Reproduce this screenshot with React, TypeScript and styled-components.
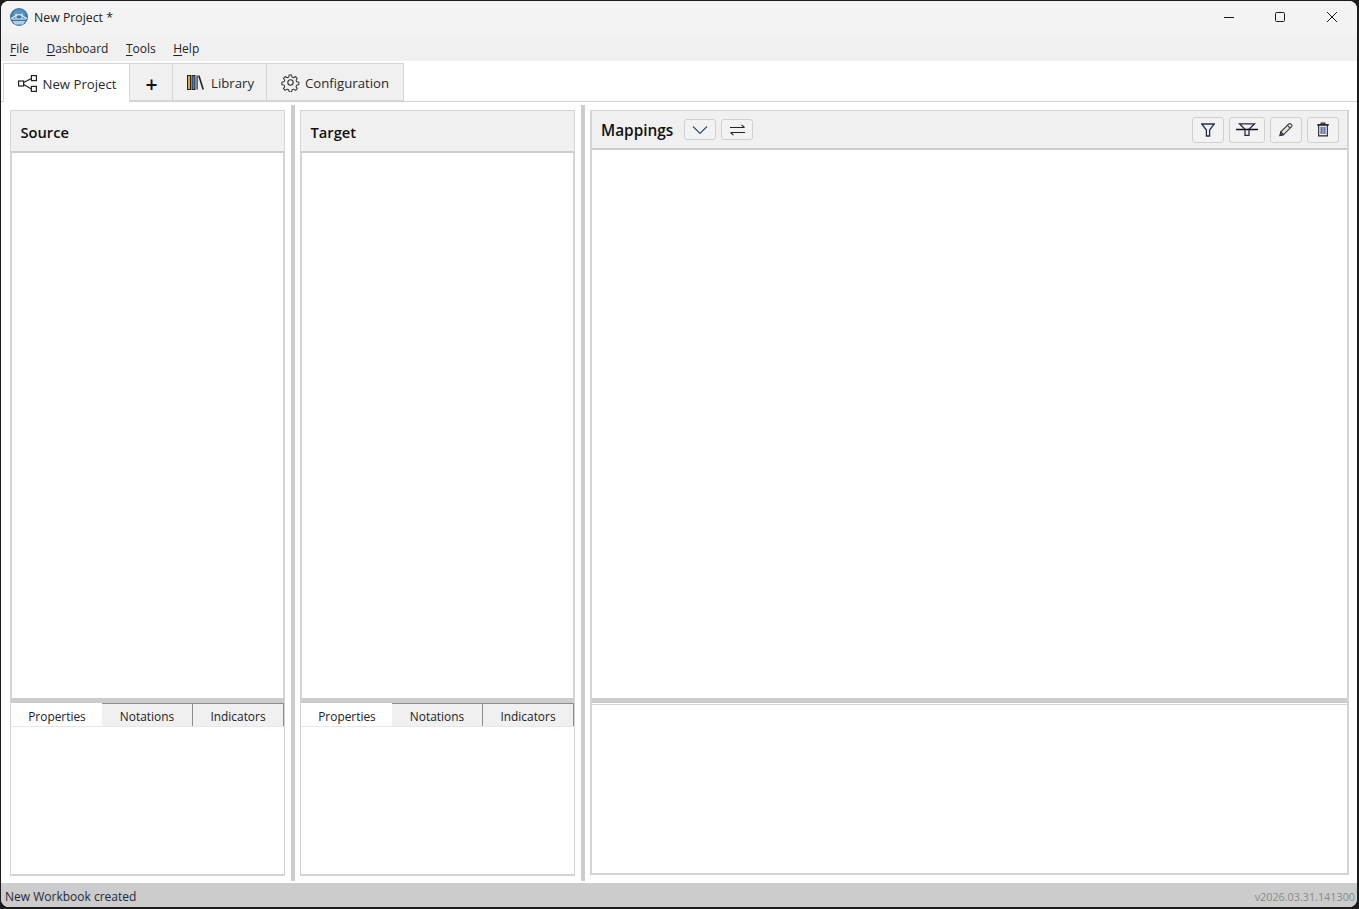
import React from 'react';
import styled, { createGlobalStyle } from 'styled-components';

const Global = createGlobalStyle`
  html, body {
    margin: 0;
    padding: 0;
    height: 909px;
    overflow: hidden;
    background: #1c1c1c;
  }
  * {
    box-sizing: border-box;
  }
`;

const AppLogo = () => (
  <svg width="18" height="18" viewBox="0 0 18 18">
    <circle cx="9" cy="9" r="9" fill="#3a77aa" />
    <path d="M2 7.500C3 3.500 6 1.500 9 1.500s6 2 7 6z" fill="#5c93bf" />
    <path d="M1 10.500c3-1 5-4 8-4s5 3 8 4" fill="none" stroke="#eef4f8" strokeWidth="1.200" />
    <path d="M6 5.500v5.500M12 5.500v5.500M2 11h14" fill="none" stroke="#eef4f8" strokeWidth="1" />
    <path d="M2.500 13h13L13 16.500H5z" fill="#b4cfe2" />
  </svg>
);

const ProjectIcon = () => (
  <svg width="19" height="17" viewBox="0 0 19 17" fill="none" stroke="#222" strokeWidth="1.200">
    <rect x="0.600" y="6" width="5" height="5" />
    <rect x="13.400" y="0.600" width="5" height="5" />
    <rect x="13.400" y="11.400" width="5" height="5" />
    <path d="M5.600 7.500L13.400 3.500M5.600 9.500L13.400 14" />
  </svg>
);

const LibraryIcon = () => (
  <svg width="17" height="15" viewBox="0 0 17 15">
    <rect x="0.500" y="0.500" width="3" height="14" fill="#e3a63a" stroke="#222" />
    <rect x="5" y="0.500" width="3" height="14" fill="#4a7fc0" stroke="#222" />
    <rect x="9.500" y="0.500" width="1.200" height="14" fill="#222" />
    <path d="M11.800 0.500l4.400 14" stroke="#222" strokeWidth="1.600" fill="none" />
  </svg>
);

const GearIcon = () => (
  <svg width="19" height="19" viewBox="0 0 24 24" fill="none" stroke="#333" strokeWidth="1.400" strokeLinejoin="round">
    <circle cx="12" cy="12" r="3.400" />
    <path d="M10.300 1.800h3.400l.6 3 2.200.9 2.600-1.700 2.400 2.400-1.700 2.600.9 2.200 3 .6v3.400l-3 .6-.9 2.200 1.700 2.600-2.400 2.400-2.600-1.700-2.200.9-.6 3h-3.400l-.6-3-2.200-.9-2.600 1.700-2.400-2.400 1.700-2.600-.9-2.200-3-.6v-3.400l3-.6.9-2.200-1.700-2.600 2.400-2.400 2.600 1.700 2.200-.9z" transform="translate(12 12) scale(.92) translate(-12.200 -12.200)" />
  </svg>
);

const ChevronIcon = () => (
  <svg width="16" height="10" viewBox="0 0 16 10" fill="none" stroke="#2c4a73" strokeWidth="1.100">
    <path d="M1 1.500l7 7 7-7" />
  </svg>
);

const SwapIcon = () => (
  <svg width="15" height="12" viewBox="0 0 15 12" fill="none" stroke="#222" strokeWidth="1.100">
    <path d="M0 3.500h14.500M11.500 .8l3 2.700" />
    <path d="M15 8.500H.5M3.500 11.200L.5 8.500" />
  </svg>
);

const FilterIcon = () => (
  <svg width="14" height="14" viewBox="0 0 14 14" fill="none" stroke="#1f2f4f" strokeWidth="1.300">
    <path d="M.8 1h12.400L8.600 7v6H5.400V7z" />
  </svg>
);

const FilterOffIcon = () => (
  <svg width="22" height="13" viewBox="0 0 22 13" fill="none" stroke="#1f2f4f" strokeWidth="1.300">
    <path d="M3.500.8h15l-5.500 5.400v6.200H9V6.200z" />
    <path d="M0 6.500h22" stroke="#111" />
  </svg>
);

const PencilIcon = () => (
  <svg width="14" height="15" viewBox="0 0 15 15" fill="none" stroke="#333" strokeWidth="1.100">
    <path d="M1 14l1-4 8.500-8.500a1.400 1.400 0 0 1 2 0l1 1a1.400 1.400 0 0 1 0 2L5 13z" fill="#e9e4da" />
    <path d="M1 14l1-4 3 3z" fill="#2e5f96" />
    <path d="M9 3l3 3" />
  </svg>
);

const TrashIcon = () => (
  <svg width="12" height="15" viewBox="0 0 13 15" fill="none" stroke="#222" strokeWidth="1.200">
    <path d="M0 2.500h13M4.500 2.500V.6h4v1.900" />
    <path d="M1.800 2.500v11.900h9.400V2.500z" />
    <path d="M4.500 4.500v8" stroke="#3f6fb3" strokeWidth="1.500" />
    <path d="M6.500 4.500v8" stroke="#8a5aa8" strokeWidth="1.500" />
    <path d="M8.500 4.500v8" stroke="#3f6fb3" strokeWidth="1.500" />
  </svg>
);

const MinimizeIcon = () => (
  <svg width="12" height="12" viewBox="0 0 12 12" stroke="#1a1a1a" strokeWidth="1">
    <path d="M2 6.500h10" />
  </svg>
);

const MaximizeIcon = () => (
  <svg width="12" height="12" viewBox="0 0 12 12" fill="none" stroke="#1a1a1a" strokeWidth="1">
    <rect x="1.500" y="1.500" width="9" height="9" rx="1.200" />
  </svg>
);

const CloseIcon = () => (
  <svg width="12" height="12" viewBox="0 0 12 12" stroke="#1a1a1a" strokeWidth="1">
    <path d="M1 1l10 10M11 1L1 11" />
  </svg>
);

const App: React.FC = () => {
  return (
    <>
      <Global />
      <Window>
        <TitleBar>
          <AppLogo />
          <TitleText>New Project *</TitleText>
          <WindowControls>
            <WindowButton><MinimizeIcon /></WindowButton>
            <WindowButton><MaximizeIcon /></WindowButton>
            <WindowButton><CloseIcon /></WindowButton>
          </WindowControls>
        </TitleBar>

        <MenuBar>
          <MenuItem><u>F</u>ile</MenuItem>
          <MenuItem><u>D</u>ashboard</MenuItem>
          <MenuItem><u>T</u>ools</MenuItem>
          <MenuItem><u>H</u>elp</MenuItem>
        </MenuBar>

        <TabStrip>
          <MainTab $active $width={127} $gap={6} $indent={1}>
            <ProjectIcon />
            New Project
          </MainTab>
          <PlusTab $width={43}>+</PlusTab>
          <MainTab $width={94} $gap={7} $indent={2}>
            <LibraryIcon />
            Library
          </MainTab>
          <MainTab $width={137} $gap={5}>
            <GearIcon />
            Configuration
          </MainTab>
        </TabStrip>

        <Workspace>
          <SidePanel title="Source" />
          <Gutter />
          <SidePanel title="Target" />
          <Gutter />
          <MappingsPanel>
            <MappingsHeader>
              <MappingsTitle>Mappings</MappingsTitle>
              <ToolButton $width={32} $height={21}><ChevronIcon /></ToolButton>
              <ToolButton $width={32} $height={21}><SwapIcon /></ToolButton>
              <ToolGroup>
                <ToolButton $width={32} $height={26}><FilterIcon /></ToolButton>
                <ToolButton $width={36} $height={26}><FilterOffIcon /></ToolButton>
                <ToolButton $width={32} $height={26}><PencilIcon /></ToolButton>
                <ToolButton $width={32} $height={26}><TrashIcon /></ToolButton>
              </ToolGroup>
            </MappingsHeader>
            <MappingsBody />
            <Splitter />
            <MappingsDetail />
          </MappingsPanel>
        </Workspace>

        <StatusBar>
          <span>New Workbook created</span>
          <Version>v2026.03.31.141300</Version>
        </StatusBar>
      </Window>
    </>
  );
};

const SidePanel: React.FC<{ title: string }> = ({ title }) => (
  <Panel>
    <PanelHeader>{title}</PanelHeader>
    <PanelBody />
    <Splitter />
    <SubTabs>
      <SubTab $active>Properties</SubTab>
      <SubTab>Notations</SubTab>
      <SubTab>Indicators</SubTab>
    </SubTabs>
    <SubTabBody />
  </Panel>
);

// Styles
const Window = styled.div`
  width: 1356px;
  height: 906px;
  margin: 1px 0 0 1px;
  display: flex;
  flex-direction: column;
  background: #ffffff;
  border-radius: 8px;
  overflow: hidden;
  font-family: 'Open Sans', 'Noto Sans', sans-serif;
  color: #1a1a1a;
`;

const TitleBar = styled.div`
  height: 34px;
  flex: none;
  display: flex;
  align-items: center;
  padding: 0 0 2px 9px;
  background: #f3f3f3;
`;

const TitleText = styled.span`
  margin-left: 6px;
  font-size: 12.300px;
  color: #222222;
`;

const WindowControls = styled.div`
  margin-left: auto;
  margin-right: -1px;
  display: flex;
`;

const WindowButton = styled.div`
  width: 52px;
  height: 32px;
  display: flex;
  align-items: center;
  justify-content: center;
`;

const MenuBar = styled.div`
  height: 26px;
  flex: none;
  display: flex;
  align-items: center;
  gap: 17.500px;
  padding-left: 9px;
  background: #f0f0f0;
  font-size: 12px;
`;

const MenuItem = styled.span`
  color: #222222;
  u {
    text-underline-offset: 2px;
  }
`;

const TabStrip = styled.div`
  height: 41px;
  flex: none;
  display: flex;
  align-items: flex-end;
  padding: 2px 0 0 2px;
  background: #ffffff;
  border-bottom: 1px solid #d0d0d0;
`;

const MainTab = styled.div<{ $active?: boolean; $width: number; $gap?: number; $indent?: number }>`
  width: ${(p) => p.$width}px;
  height: ${(p) => (p.$active ? 39 : 38)}px;
  margin-bottom: ${(p) => (p.$active ? -1 : 0)}px;
  padding: 1px 0 0 ${(p) => p.$indent ?? 0}px;
  display: flex;
  align-items: center;
  justify-content: center;
  gap: ${(p) => p.$gap ?? 6}px;
  font-size: 13.200px;
  color: #2a2a2a;
  background: ${(p) => (p.$active ? '#ffffff' : '#f0f0f0')};
  border: 1px solid #d6d6d6;
  border-left-width: ${(p) => (p.$active ? 1 : 0)}px;
  border-bottom-width: ${(p) => (p.$active ? 0 : 1)}px;
`;

const PlusTab = styled(MainTab)`
  padding: 3px 0 0 1px;
  font-size: 21px;
  font-weight: 600;
  color: #111111;
`;

const Workspace = styled.div`
  flex: 1;
  min-height: 0;
  display: flex;
  align-items: stretch;
  padding: 3px 8px 2px 9px;
  gap: 5px;
`;

const Gutter = styled.div`
  width: 4px;
  flex: none;
  margin-left: 1px;
  background: #cccccc;
`;

const Panel = styled.div`
  width: 275px;
  flex: none;
  margin: 5px 0;
  display: flex;
  flex-direction: column;
  border: 1px solid #d4d4d4;
  border-bottom-width: 2px;
  background: #ffffff;
`;

const PanelHeader = styled.div`
  height: 42px;
  flex: none;
  display: flex;
  align-items: center;
  padding: 2px 0 0 9.500px;
  background: #f0f0f0;
  border-bottom: 2px solid #cccccc;
  font-size: 14.700px;
  font-weight: 600;
  color: #111111;
`;

const PanelBody = styled.div`
  flex: 1;
  border: solid #d4d4d4;
  border-width: 0 1px;
`;

const Splitter = styled.div`
  height: 5px;
  flex: none;
  background: #cccccc;
`;

const SubTabs = styled.div`
  height: 23px;
  flex: none;
  display: flex;
  margin-left: 1px;
`;

const SubTab = styled.div<{ $active?: boolean }>`
  flex: 1;
  display: flex;
  align-items: center;
  justify-content: center;
  padding-top: 1px;
  font-size: 11.900px;
  color: #222222;
  background: ${(p) => (p.$active ? '#ffffff' : '#f0f0f0')};
  border-top: 1px solid ${(p) => (p.$active ? '#ffffff' : '#8c8c8c')};
  border-right: ${(p) => (p.$active ? 'none' : '1px solid #8c8c8c')};
`;

const SubTabBody = styled.div`
  height: 148px;
  flex: none;
  border-top: 1px solid #e8e8e8;
`;

const MappingsPanel = styled.div`
  flex: 1;
  min-width: 0;
  margin: 5px 0 6px;
  display: flex;
  flex-direction: column;
  border: 2px solid #d4d4d4;
  border-top-width: 1px;
`;

const MappingsHeader = styled.div`
  height: 39px;
  flex: none;
  display: flex;
  align-items: center;
  gap: 5px;
  padding: 0 8px 0 9px;
  background: #f0f0f0;
  border-bottom: 2px solid #cccccc;
`;

const MappingsTitle = styled.span`
  width: 73px;
  margin-right: 5px;
  padding-top: 1px;
  font-size: 15.400px;
  font-weight: 600;
  white-space: nowrap;
  color: #111111;
`;

const ToolGroup = styled.div`
  margin-left: auto;
  display: flex;
  gap: 5px;
`;

const ToolButton = styled.div<{ $width: number; $height: number }>`
  width: ${(p) => p.$width}px;
  height: ${(p) => p.$height}px;
  display: flex;
  align-items: center;
  justify-content: center;
  background: #f2f2f2;
  border: 1px solid #d0d0d0;
  border-radius: 3px;
`;

const MappingsBody = styled.div`
  flex: 1;
  background: #ffffff;
`;

const MappingsDetail = styled.div`
  height: 170px;
  flex: none;
  background: #ffffff;
  box-shadow: inset 0 1px 0 #ffffff, inset 0 2px 0 #d4d4d4;
`;

const StatusBar = styled.div`
  height: 24px;
  flex: none;
  display: flex;
  align-items: center;
  justify-content: space-between;
  padding: 2px 2px 0 4px;
  background: #cccccc;
  font-size: 12px;
  color: #1f2a38;
`;

const Version = styled.span`
  font-size: 10.800px;
  color: #8a8a8a;
`;

export default App;
